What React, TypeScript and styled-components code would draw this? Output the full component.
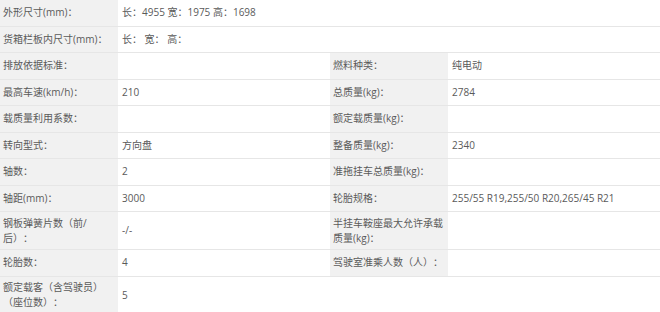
import React from "react";
import styled, { createGlobalStyle } from "styled-components";

const GlobalStyle = createGlobalStyle`
  html, body {
    margin: 0;
    padding: 0;
    background: #ffffff;
  }
`;

interface Spec {
  label: string;
  value?: string;
}

interface Row {
  left: Spec;
  right?: Spec;
  wide?: boolean;
}

const rows: Row[] = [
  { left: { label: "外形尺寸(mm)：", value: "长：4955 宽：1975 高：1698" }, wide: true },
  { left: { label: "货箱栏板内尺寸(mm)：", value: "长： 宽： 高：" }, wide: true },
  { left: { label: "排放依据标准：" }, right: { label: "燃料种类：", value: "纯电动" } },
  { left: { label: "最高车速(km/h)：", value: "210" }, right: { label: "总质量(kg)：", value: "2784" } },
  { left: { label: "载质量利用系数：" }, right: { label: "额定载质量(kg)：" } },
  { left: { label: "转向型式：", value: "方向盘" }, right: { label: "整备质量(kg)：", value: "2340" } },
  { left: { label: "轴数：", value: "2" }, right: { label: "准拖挂车总质量(kg)：" } },
  {
    left: { label: "轴距(mm)：", value: "3000" },
    right: { label: "轮胎规格：", value: "255/55 R19,255/50 R20,265/45 R21" },
  },
  { left: { label: "钢板弹簧片数（前/后）：", value: "-/-" }, right: { label: "半挂车鞍座最大允许承载质量(kg)：" } },
  { left: { label: "轮胎数：", value: "4" }, right: { label: "驾驶室准乘人数（人）：" } },
  { left: { label: "额定载客（含驾驶员）（座位数）：", value: "5" } },
];

export default function App() {
  return (
    <>
      <GlobalStyle />
      <SpecTable>
        {rows.map((row, i) => (
          <React.Fragment key={i}>
            <Label>{row.left.label}</Label>
            <Value $span={row.wide ? 3 : 1}>{row.left.value}</Value>
            {row.right && (
              <>
                <Label>{row.right.label}</Label>
                <Value>{row.right.value}</Value>
              </>
            )}
          </React.Fragment>
        ))}
      </SpecTable>
    </>
  );
}

const SpecTable = styled.div`
  display: grid;
  grid-template-columns: 118px 212px 118px 212px;
  width: 660px;
  font-family: "Open Sans", "Noto Sans CJK SC", sans-serif;
  font-size: 10px;
  line-height: 15px;
  color: #5a5a5a;
  text-spacing-trim: space-all;
`;

const Cell = styled.div`
  display: flex;
  align-items: center;
  min-height: 18.5px;
  padding: 3.5px 3px;
  border-bottom: 1px solid #e6e6e6;
  overflow-wrap: anywhere;
`;

const Label = styled(Cell)`
  background: #f1f1f1;
`;

const Value = styled(Cell)<{ $span?: number }>`
  background: #ffffff;
  padding-left: 4px;
  grid-column: span ${(p) => p.$span ?? 1};
`;
